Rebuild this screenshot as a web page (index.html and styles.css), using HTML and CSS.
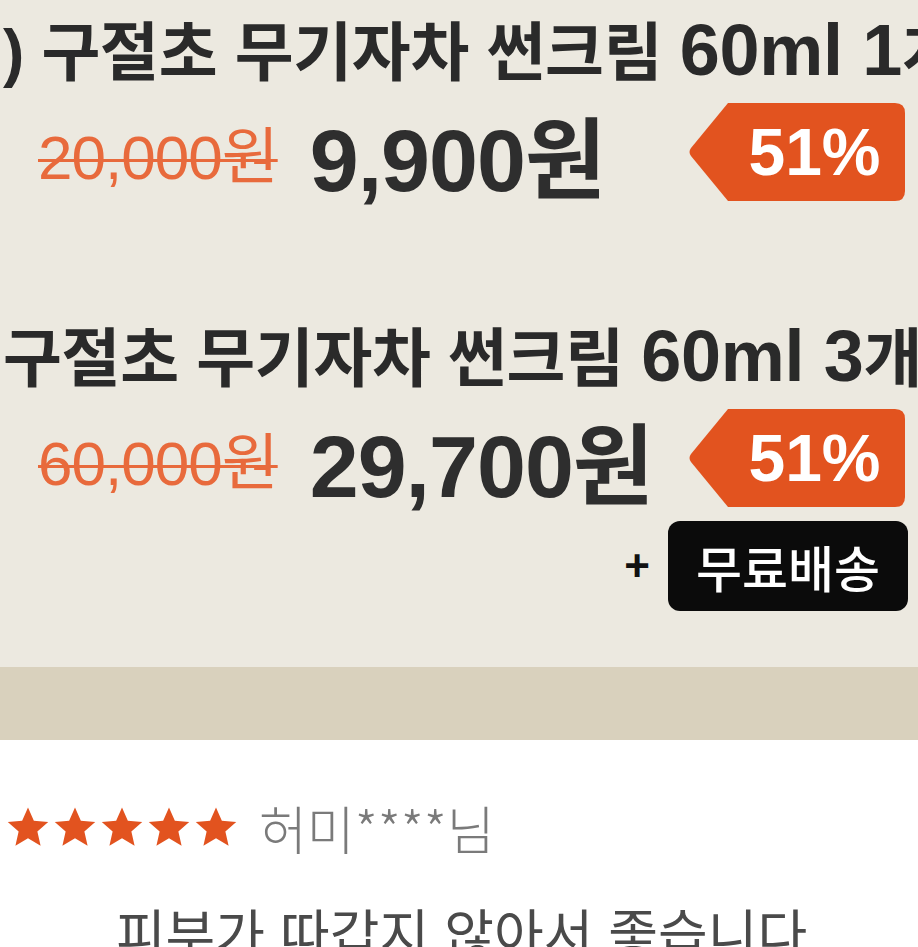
FILE: index.html
```html
<!DOCTYPE html>
<html lang="ko">
<head>
<meta charset="utf-8">
<title>구절초 무기자차 썬크림</title>
<link rel="stylesheet" href="styles.css">
</head>
<body>
<section class="product">
  <div class="option">
    <div class="title">) 구절초 무기자차 썬크림 <span class="latin">60ml 1</span>개</div>
    <div class="price-row">
      <span class="old-price">20,000원</span>
      <span class="new-price">9,900원</span>
      <span class="badge">51%</span>
    </div>
  </div>
  <div class="option option-second">
    <div class="title">구절초 무기자차 썬크림 <span class="latin">60ml 3</span>개</div>
    <div class="price-row">
      <span class="old-price">60,000원</span>
      <span class="new-price">29,700원</span>
      <span class="badge">51%</span>
    </div>
    <div class="shipping-row">
      <span class="plus">+</span>
      <span class="free-ship">무료배송</span>
    </div>
  </div>
</section>
<div class="band"></div>
<section class="review">
  <div class="review-head">
    <span class="stars">
      <svg class="star" viewBox="0 0 24 24"><path d="M12 1.8l3.05 6.9 7.5.7-5.66 5 1.68 7.36L12 17.9l-6.57 3.86 1.68-7.36-5.66-5 7.5-.7z"/></svg>
      <svg class="star" viewBox="0 0 24 24"><path d="M12 1.8l3.05 6.9 7.5.7-5.66 5 1.68 7.36L12 17.9l-6.57 3.86 1.68-7.36-5.66-5 7.5-.7z"/></svg>
      <svg class="star" viewBox="0 0 24 24"><path d="M12 1.8l3.05 6.9 7.5.7-5.66 5 1.68 7.36L12 17.9l-6.57 3.86 1.68-7.36-5.66-5 7.5-.7z"/></svg>
      <svg class="star" viewBox="0 0 24 24"><path d="M12 1.8l3.05 6.9 7.5.7-5.66 5 1.68 7.36L12 17.9l-6.57 3.86 1.68-7.36-5.66-5 7.5-.7z"/></svg>
      <svg class="star" viewBox="0 0 24 24"><path d="M12 1.8l3.05 6.9 7.5.7-5.66 5 1.68 7.36L12 17.9l-6.57 3.86 1.68-7.36-5.66-5 7.5-.7z"/></svg>
    </span>
    <span class="reviewer">허미****님</span>
  </div>
  <p class="review-text">피부가 따갑지 않아서 좋습니다</p>
</section>
</body>
</html>
```

FILE: styles.css
```css
* { box-sizing: border-box; }
html, body { margin: 0; padding: 0; }
body {
  width: 918px;
  height: 947px;
  overflow: hidden;
  background: #ffffff;
  font-family: "Liberation Sans", "Noto Sans CJK KR", sans-serif;
  color: #2c2c2c;
}
.product {
  background: #ece9e0;
  padding: 0 10px 56px 0;
  overflow: hidden;
}
.title {
  height: 100px;
  line-height: 100px;
  font-size: 64px;
  font-weight: 700;
  white-space: nowrap;
  padding-left: 3px;
  color: #2a2a2a;
  letter-spacing: -0.3px;
}
.latin {
  font-size: 72px;
  letter-spacing: -0.3px;
}
.price-row {
  display: flex;
  align-items: center;
  height: 104px;
}
.old-price {
  margin-left: 38px;
  font-size: 62px;
  color: #e86a3c;
  text-decoration: line-through;
  text-decoration-thickness: 3px;
  letter-spacing: -1px;
}
.new-price {
  margin-left: 32px;
  font-size: 88px;
  font-weight: 700;
  color: #2e2e2e;
  letter-spacing: -1px;
}
.badge {
  margin-left: auto;
  margin-right: 3px;
  width: 217px;
  height: 98px;
  padding-left: 36px;
  display: flex;
  align-items: center;
  justify-content: center;
  background: #e2531f;
  color: #ffffff;
  font-size: 66px;
  font-weight: 700;
  clip-path: path('M40 0 H207 Q217 0 217 10 V88 Q217 98 207 98 H40 L3 53 Q0 49 3 45 Z');
}
.option-second { margin-top: 102px; }
.shipping-row {
  display: flex;
  justify-content: flex-end;
  align-items: center;
  gap: 18px;
  margin-top: 11px;
}
.plus {
  font-size: 44px;
  font-weight: 700;
  color: #111;
}
.free-ship {
  width: 240px;
  height: 90px;
  border-radius: 12px;
  background: #0b0b0b;
  color: #fff;
  font-size: 50px;
  font-weight: 500;
  display: flex;
  align-items: center;
  justify-content: center;
}
.band {
  height: 73px;
  background: #d9d1bd;
}
.review {
  background: #fff;
  padding: 59px 0 0 5px;
}
.review-head {
  display: flex;
  align-items: center;
  height: 56px;
  gap: 20px;
}
.stars { display: flex; gap: 1px; }
.star { width: 46px; height: 46px; fill: #e2531f; }
.reviewer {
  font-family: "Noto Sans CJK KR", sans-serif;
  font-weight: 300;
  font-size: 52px;
  color: #7a7a7a;
}
.review-text {
  margin: 37px 0 0;
  text-align: center;
  font-family: "Noto Sans CJK KR", sans-serif;
  font-size: 54px;
  color: #4a4a4a;
  line-height: 80px;
}
```
